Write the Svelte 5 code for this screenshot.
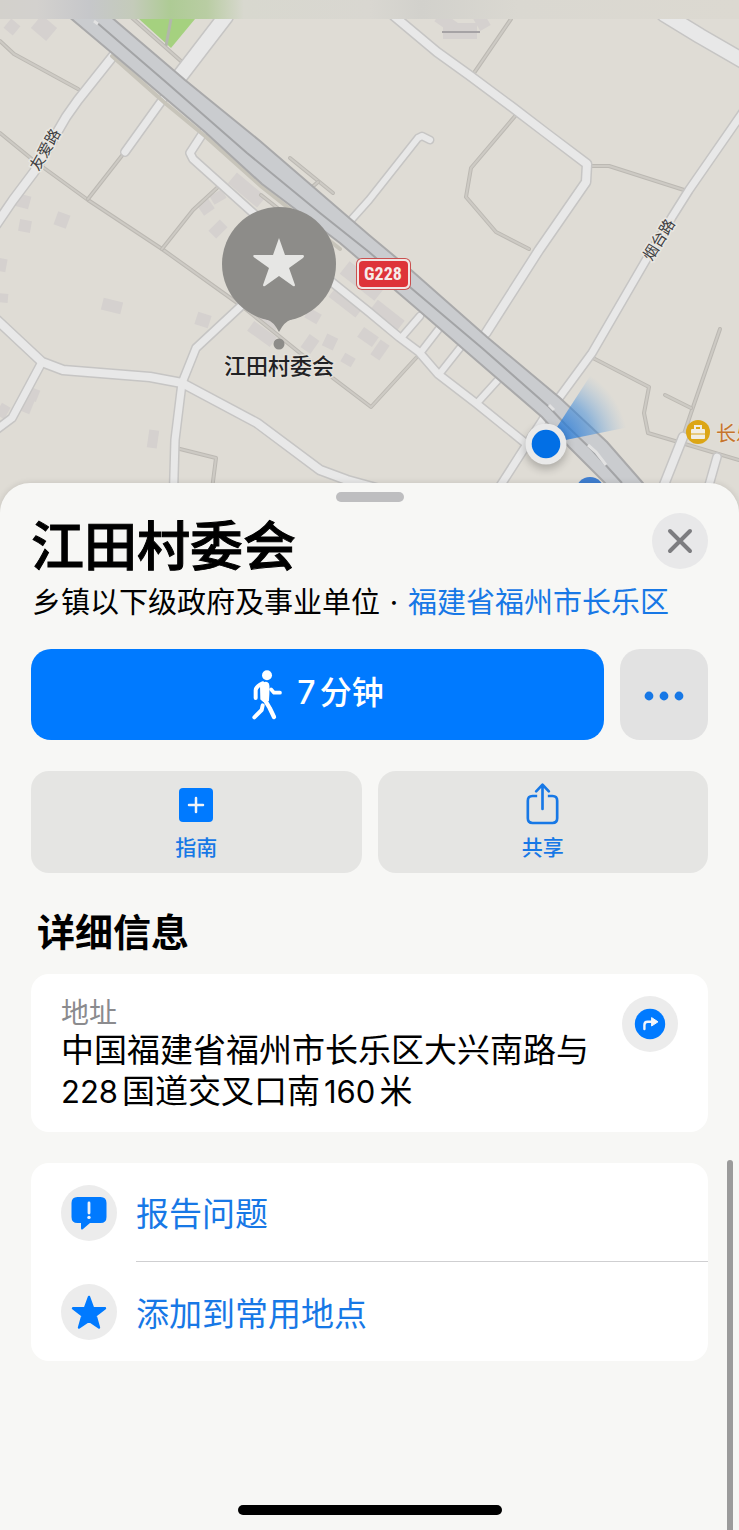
<script>
  const roads = [
    { d: 'M113 56L78 100L66 117L34 172L13 200L-4 225', w: 8 },
    { d: 'M163 99L125 152', w: 7 },
    { d: 'M203 133L190 153L193 159L252 212L333 283L369 312L399 337L419 352L438 374L477 404L524 442', w: 7 },
    { d: 'M420 316L401 338', w: 6 },
    { d: 'M438 330L421 352', w: 6 },
    { d: 'M460 348L441 372', w: 6 },
    { d: 'M497 381L478 402', w: 6 },
    { d: 'M352 219L369 200L418 138L422 136L430 140', w: 6 },
    { d: 'M226 16L180 76', w: 14 },
    { d: 'M394 16L437 52L469 75L512 107L546 133L587 164L586 182L539 250L486 333', w: 8 },
    { d: 'M664 14L700 36L745 62', w: 14 },
    { d: 'M743 112L689 190L672 217L646 260L592 353L559 398', w: 7 },
    { d: 'M-3 320L42 362L63 370L150 377L182 383L257 423L320 470L347 480L420 500', w: 8 },
    { d: 'M42 362L12 418L-4 430', w: 7 },
    { d: 'M182 383L196 348L240 307', w: 7 },
    { d: 'M182 383L175 440L173 510', w: 7 },
    { d: 'M544 418L520 455L488 505', w: 7 },
    { d: 'M683 437L656 505', w: 8 },
    { d: 'M717 457L702 510', w: 7 }
  ];

  const paths = [
    'M0 41L14 54L78 89',
    'M0 133L33 160L88 200L162 249L243 307L300 353L371 407L416 358',
    'M124 153L88 199',
    'M218 187L193 210L162 249',
    'M290 158L333 193',
    'M318 182L311 188',
    'M261 195L280 210',
    'M130 16L182 62',
    'M511 19L474 73',
    'M516 115L471 168L466 197L496 232L529 249',
    'M592 166L609 166L684 190',
    'M591 357L649 387L644 413L648 433L739 460',
    'M720 329L691 413L682 440',
    'M665 395L691 408',
    'M176 448L216 458L210 505'
  ];

  const buildings = [
    [12, 27, 12, 12, -50], [44, 28, 20, 17, 40], [22, 201, 16, 13, 15], [25, 226, 12, 12, 10],
    [62, 220, 13, 14, 20], [2, 265, 9, 13, 10], [3, 298, 10, 9, 5], [112, 306, 20, 12, 14],
    [203, 320, 14, 13, 18], [153, 439, 10, 18, 8], [28, 404, 10, 18, 22], [32, 394, 13, 12, 22],
    [3, 411, 10, 13, 30], [206, 207, 13, 12, -35], [218, 197, 14, 10, -30], [218, 229, 16, 11, -45],
    [247, 190, 38, 14, 40], [262, 334, 28, 12, 36], [313, 316, 14, 11, 30], [310, 344, 12, 16, 35],
    [330, 342, 12, 13, 25], [348, 360, 12, 10, 30], [346, 302, 34, 13, 38], [362, 281, 44, 16, 38],
    [386, 317, 34, 17, 38], [368, 337, 18, 12, 35], [380, 350, 11, 18, 35], [268, 318, 26, 12, 35],
    [460, 31, 34, 16, 0], [446, 22, 20, 12, 35], [482, 22, 12, 14, -30]
  ];

  const actions = [
    { icon: 'plus', label: '指南' },
    { icon: 'share', label: '共享' }
  ];

  const links = [
    { icon: 'report', label: '报告问题' },
    { icon: 'star', label: '添加到常用地点' }
  ];
</script>

<main class="screen">
  <svg class="map" viewBox="0 0 739 520" role="img" aria-label="地图">
    <defs>
      <linearGradient id="band" x1="0" x2="1" y1="0" y2="0">
        <stop offset="0" stop-color="#d3d1cc" />
        <stop offset="0.05" stop-color="#d3d1ce" />
        <stop offset="0.12" stop-color="#c6c7ca" />
        <stop offset="0.18" stop-color="#c4cbba" />
        <stop offset="0.23" stop-color="#aecb95" />
        <stop offset="0.28" stop-color="#b9cda3" />
        <stop offset="0.33" stop-color="#d8d8cf" />
        <stop offset="0.5" stop-color="#d9d7d1" />
        <stop offset="0.57" stop-color="#d2d1cc" />
        <stop offset="0.7" stop-color="#dad8d1" />
        <stop offset="1" stop-color="#dcd9d1" />
      </linearGradient>
      <radialGradient id="beam" gradientUnits="userSpaceOnUse" cx="546" cy="444" r="82">
        <stop offset="0.2" stop-color="#1671d9" stop-opacity="0.8" />
        <stop offset="0.6" stop-color="#3c8bdc" stop-opacity="0.5" />
        <stop offset="1" stop-color="#7fb0e0" stop-opacity="0" />
      </radialGradient>
      <filter id="soft" x="-50%" y="-50%" width="200%" height="200%">
        <feGaussianBlur stdDeviation="4" />
      </filter>
    </defs>

    <rect width="739" height="520" fill="#dfdcd5" />
    <path d="M139 19H195L171 48Z" fill="#a5d17f" />
    <path d="M171 19L166 46" stroke="#b2b7ab" stroke-width="3" />

    {#each buildings as [x, y, w, h, r]}
      <rect x={x - w / 2} y={y - h / 2} width={w} height={h} fill="#d5d1cf" transform="rotate({r} {x} {y})" />
    {/each}
    <path d="M442 32H480" stroke="#a6a3a5" stroke-width="2" />

    <g fill="none" stroke-linejoin="round" stroke-linecap="round">
      {#each paths as d}
        <path {d} stroke="#bcb9b3" stroke-width="4" />
        <path {d} stroke="#cdcac4" stroke-width="2" />
      {/each}
      {#each roads as road}
        <path d={road.d} stroke="#c6c5c4" stroke-width={road.w + 3} />
      {/each}
      {#each roads as road}
        <path d={road.d} stroke="#e8e8e8" stroke-width={road.w} />
      {/each}
      <path d="M112 56L165 103L205 136L262 187L340 249" stroke="#c7c4ba" stroke-width="4" />
    </g>

    <path
      d="M68 16L112 53L165 98L205 132L262 184L340 243L416 308L484 367L542 417L569 447L604 482L630 510H664L642 482L607 442L560 398L487 337L411 270L369 235L260 141L185 80L110 16Z"
      fill="#cacccf" stroke="#a9a9aa" stroke-width="2"
    />
    <path d="M95 21L167 83L247 153L320 213L369 252L411 288L482 348L549 407L566 425L592 450L622 483" fill="none" stroke="#a3a4a6" stroke-width="2" />
    <path d="M94 21L98 24M549 405L554 410M588 445L596 452L606 465" stroke="#e2e2e2" stroke-width="3" fill="none" />

    <rect width="739" height="19" fill="url(#band)" />

    <g class="road-name">
      <text transform="translate(44 149) rotate(-60)" text-anchor="middle" dominant-baseline="central">友爱路</text>
      <text transform="translate(658 239) rotate(-58)" text-anchor="middle" dominant-baseline="central">烟台路</text>
    </g>

    <rect x="356" y="258" width="55" height="32" rx="6" fill="#c9504f" />
    <rect x="357" y="259" width="53" height="30" rx="5" fill="#f1e6e4" />
    <rect x="359" y="261" width="49" height="26" rx="4" fill="#de3439" />
    <text class="shield" x="383" y="280" text-anchor="middle">G228</text>

    <path d="M546 444L594 370Q628 386 634 426Z" fill="url(#beam)" />
    <circle cx="546" cy="448" r="21" fill="#000" opacity="0.22" filter="url(#soft)" />
    <circle cx="546" cy="444" r="20.5" fill="#e9e9e9" />
    <circle cx="546" cy="444" r="14.300" fill="#026fe5" />
    <circle cx="590" cy="491" r="14" fill="#3f7ed0" />

    <circle cx="698" cy="432" r="12" fill="#dca616" />
    <rect x="691" y="429" width="14" height="10" rx="1" fill="#f2eee3" />
    <path d="M695 429V426H701V429" fill="none" stroke="#f2eee3" stroke-width="2" />
    <path d="M691 434H705" stroke="#dca616" stroke-width="1" />
    <text class="poi" x="716" y="441">长乐</text>

    <circle cx="279" cy="264" r="57" fill="#8d8c89" />
    <path d="M258 316Q272 320 276 327L279 332L282 327Q286 320 300 316Z" fill="#8d8c89" />
    <path
      d="M279 238L285 255H303Q305 256 303 258L289 268L295 285Q295 287 293 286L279 276L265 286Q263 287 263 285L269 268L255 258Q252 256 254 255H273Z"
      fill="#e6e6e4"
    />
    <circle cx="279" cy="344" r="5.500" fill="#8d8c89" />
    <text class="place" x="279" y="374" text-anchor="middle">江田村委会</text>
  </svg>

  <section class="sheet">
    <div class="grabber"></div>
    <header>
      <h1>江田村委会</h1>
      <button class="round close" aria-label="关闭">
        <svg width="26" height="26" viewBox="0 0 26 26" fill="none" stroke="#7d7d80" stroke-width="4" stroke-linecap="round">
          <path d="M3 3L23 23M23 3L3 23" />
        </svg>
      </button>
    </header>
    <p class="subtitle">乡镇以下级政府及事业单位<span class="dot">·</span><a href="#region">福建省福州市长乐区</a></p>

    <div class="primary">
      <button class="walk">
        <svg width="32" height="52" viewBox="152 88 96 156" fill="none" stroke="#fff" stroke-linecap="round" stroke-linejoin="round">
          <circle cx="200" cy="107" r="15" fill="#fff" stroke="none" />
          <path d="M187 131Q167 140 166 152V175" stroke-width="12" />
          <path d="M182 138Q194 124 203 133Q206 140 203 182L190 184L183 178Z" fill="#fff" stroke-width="6" />
          <path d="M193 180L208 205L221 232" stroke-width="13" />
          <path d="M187 197L184 211L162 233" stroke-width="12" />
          <path d="M212 149L221 159H239" stroke-width="11" />
        </svg>
        <span class="time"><span class="digit">7</span>分钟</span>
      </button>
      <button class="more" aria-label="更多">
        <svg width="40" height="10" viewBox="0 0 40 10" fill="#1778e6">
          <circle cx="5" cy="5" r="4.4" /><circle cx="20" cy="5" r="4.4" /><circle cx="35" cy="5" r="4.4" />
        </svg>
      </button>
    </div>

    <div class="tiles">
      {#each actions as action}
        <button class="tile">
          <span class="tile-icon">
            {#if action.icon === 'plus'}
              <svg width="36" height="36" viewBox="0 0 36 36">
                <rect x="1" y="1" width="34" height="34" rx="4" fill="#007aff" />
                <path d="M18 11V25M11 18H25" stroke="#f0f4f8" stroke-width="2.500" stroke-linecap="round" />
              </svg>
            {:else}
              <svg width="35" height="44" viewBox="944 428 104 132" fill="none" stroke="#1778e6" stroke-width="8" stroke-linecap="round" stroke-linejoin="round">
                <path stroke-linecap="butt" d="M980 467H966Q952 467 952 481V534Q952 548 966 548H1026Q1040 548 1040 534V481Q1040 467 1026 467H1012" />
                <path d="M996 435V506M977 453L996 433L1015 453" />
              </svg>
            {/if}
          </span>
          <span>{action.label}</span>
        </button>
      {/each}
    </div>

    <h2>详细信息</h2>

    <div class="card address">
      <div>
        <div class="caption">地址</div>
        <p>中国福建省福州市长乐区大兴南路与<br /><span class="num first">228</span>国道交叉口南<span class="num">160</span>米</p>
      </div>
      <button class="round" aria-label="路线">
        <svg width="32" height="32" viewBox="0 0 32 32">
          <circle cx="16" cy="16" r="15.2" fill="#007aff" />
          <path d="M10.4 21V17Q10.4 13.8 13.6 13.8H18" fill="none" stroke="#f2f5fa" stroke-width="2.4" stroke-linecap="round" />
          <path d="M17.6 9.6L24 13.8L17.6 18Z" fill="#f2f5fa" stroke="#f2f5fa" stroke-linejoin="round" />
        </svg>
      </button>
    </div>

    <nav class="card links">
      {#each links as link}
        <a href="#{link.icon}">
          <span class="round">
            {#if link.icon === 'report'}
              <svg width="36" height="36" viewBox="0 0 36 36">
                <path d="M6.500 2H29.500Q35.500 2 35.500 8V22Q35.500 28 29.500 28H19L12 34Q10 35.500 10 33V28H6.500Q.5 28 .5 22V8Q.5 2 6.500 2Z" fill="#007aff" />
                <path d="M18 8V18" stroke="#eef3f9" stroke-width="2.800" stroke-linecap="round" />
                <circle cx="18" cy="22.4" r="1.700" fill="#eef3f9" />
              </svg>
            {:else}
              <svg width="36" height="36" viewBox="0 0 36 36">
                <path d="M18 3L22 14L34 14.200L24.600 21.600L28 33.600L18 26.800L8 33.600L11.400 21.600L2 14.200L14 14Z" fill="#007aff" stroke="#007aff" stroke-width="2.400" stroke-linejoin="round" />
              </svg>
            {/if}
          </span>
          <span class="link-label">{link.label}</span>
        </a>
      {/each}
    </nav>

    <div class="scrollbar"></div>
    <div class="home"></div>
  </section>
</main>

<style>
  :global(body) {
    background: #f7f7f5;
  }
  .screen {
    display: flex;
    flex-direction: column;
    min-height: 100vh;
    font-family: Inter, 'Noto Sans CJK SC', sans-serif;
    color: #000;
  }
  .map {
    display: block;
    width: 100%;
    height: auto;
    font-family: 'Noto Sans CJK SC', sans-serif;
  }
  .road-name text {
    font-size: 15px;
    fill: #3c3c3e;
    stroke: #e8e6e1;
    stroke-width: 3px;
    paint-order: stroke;
  }
  .shield {
    font: 700 18px 'Roboto Condensed', 'Liberation Sans Narrow', Roboto, sans-serif;
    fill: #f6ecea;
  }
  .poi {
    font-size: 20px;
    fill: #c6752d;
    stroke: #e6e1d8;
    stroke-width: 2px;
    paint-order: stroke;
  }
  .place {
    font-size: 22px;
    font-weight: 500;
    fill: #222224;
    stroke: #e3e0da;
    stroke-width: 3px;
    paint-order: stroke;
  }
  .sheet {
    position: relative;
    flex: 1;
    display: flex;
    flex-direction: column;
    margin-top: -37px;
    padding: 9px 31px 15px;
    border-radius: 30px 30px 0 0;
    background: #f7f7f5;
    box-shadow: 0 0 6px rgba(0, 0, 0, 0.12);
  }
  .grabber {
    align-self: center;
    width: 68px;
    height: 10px;
    border-radius: 5px;
    background: #bebec0;
  }
  header {
    display: flex;
    justify-content: space-between;
    align-items: flex-start;
    margin-top: 11px;
  }
  h1,
  h2,
  p {
    margin: 0;
  }
  h1 {
    font-size: 53px;
    line-height: 68px;
    font-weight: 500;
    -webkit-text-stroke: 1px #000;
  }
  button {
    border: 0;
    padding: 0;
    font: inherit;
    color: inherit;
    cursor: pointer;
  }
  .round {
    display: flex;
    flex: none;
    align-items: center;
    justify-content: center;
    width: 56px;
    height: 56px;
    border-radius: 50%;
    background: #ececec;
  }
  .close {
    background: #e8e8e9;
  }
  .subtitle {
    padding-left: 1px;
    font-size: 29px;
    line-height: 44px;
    white-space: nowrap;
  }
  .dot {
    display: inline-block;
    width: 28px;
    text-align: center;
  }
  a {
    color: #1778e6;
    text-decoration: none;
  }
  .primary {
    display: flex;
    gap: 16px;
    height: 91px;
    margin-top: 24px;
  }
  .walk {
    flex: 1;
    display: flex;
    align-items: center;
    justify-content: center;
    gap: 14px;
    border-radius: 20px;
    background: #007aff;
    color: #fff;
    font-size: 32px;
    line-height: 44px;
    font-weight: 500;
  }
  .time {
    padding-bottom: 4px;
  }
  .digit {
    margin-right: 4px;
  }
  .more {
    width: 88px;
    border-radius: 20px;
    background: #e2e2e2;
  }
  .tiles {
    display: grid;
    grid-template-columns: 1fr 1fr;
    gap: 16px;
    margin-top: 31px;
  }
  .tile {
    display: flex;
    flex-direction: column;
    align-items: center;
    gap: 6px;
    padding: 11px 0 10px;
    border-radius: 18px;
    background: #e5e5e3;
    color: #1778e6;
    font-size: 21px;
    line-height: 30px;
    font-weight: 500;
  }
  .tile-icon {
    display: flex;
    align-items: center;
    height: 45px;
  }
  h2 {
    margin: 31px 0 0 6px;
    font-size: 38px;
    line-height: 56px;
    font-weight: 700;
  }
  .card {
    border-radius: 18px;
    background: #fff;
  }
  .address {
    display: flex;
    justify-content: space-between;
    align-items: flex-start;
    margin-top: 14px;
    padding: 22px 30px 20px;
  }
  .caption {
    font-size: 28px;
    line-height: 34px;
    color: #8b8b8e;
  }
  .address p {
    font-size: 33px;
    line-height: 41px;
  }
  .num {
    margin: 0 4px;
    font-size: 31px;
  }
  .first {
    margin-left: 0;
  }
  .links {
    margin-top: 31px;
  }
  .links a {
    display: flex;
    align-items: center;
    gap: 19px;
    height: 99px;
    padding-left: 30px;
  }
  .link-label {
    flex: 1;
    display: flex;
    align-items: center;
    height: 100%;
    box-sizing: border-box;
    font-size: 33px;
  }
  .links a:first-child .link-label {
    border-bottom: 1px solid #cfcfd1;
  }
  .scrollbar {
    position: absolute;
    top: 677px;
    right: 6px;
    bottom: 0;
    width: 6px;
    border-radius: 3px 3px 0 0;
    background: #9b9b9b;
  }
  .home {
    align-self: center;
    width: 264px;
    height: 10px;
    margin-top: auto;
    border-radius: 5px;
    background: #000;
  }
</style>
